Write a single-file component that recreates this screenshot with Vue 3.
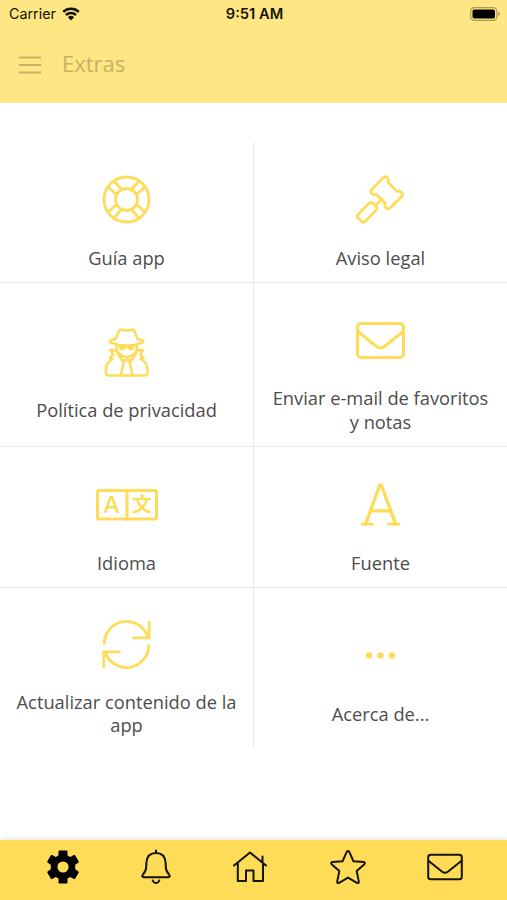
<template>
  <div class="screen">
    <header class="header">
      <div class="status-bar">
        <div class="carrier">
          <span>Carrier</span>
          <svg class="wifi" viewBox="0 0 18 14">
            <path d="M1.2 4.8a11.5 11.5 0 0 1 15.6 0M4 8a7.3 7.3 0 0 1 10 0" />
            <path class="wifi-dot" d="M5.9 10.3a4.5 4.5 0 0 1 6.2 0L9 13.5z" />
          </svg>
        </div>
        <span class="time">9:51 AM</span>
        <svg class="battery" viewBox="0 0 31 14">
          <rect class="battery-shell" x=".6" y=".6" width="26.3" height="12.8" rx="3.8" />
          <rect x="2.5" y="2.5" width="22.5" height="9" rx="1.8" />
          <path class="battery-tip" d="M28.2 5c2.3.8 2.3 3.2 0 4z" />
        </svg>
      </div>
      <div class="title-bar">
        <svg class="menu" viewBox="0 0 22 18">
          <path d="M0 1.5h22M0 9h22M0 16.5h22" />
        </svg>
        <h1>Extras</h1>
      </div>
    </header>

    <main class="grid">
      <div v-for="item in items" :key="item.icon" class="cell">
        <svg v-if="item.icon === 'guide'" class="icon thin" viewBox="0 0 49 49">
          <circle cx="24.5" cy="24.5" r="22.5" />
          <circle cx="24.5" cy="24.5" r="11" />
          <path d="M12.5 6.500l6.500 7.500M6.500 12.500l7.500 6.500M36.500 6.500L30 14M42.500 12.500L35 19M12.500 42.500L19 35M6.500 36.500L14 30M36.500 42.500L30 35M42.500 36.500L35 30" />
        </svg>
        <svg v-else-if="item.icon === 'legal'" class="icon thin" viewBox="0 0 49 49">
          <path d="M15.5 14.8L27.2 2.6q2.2-1.9 4.3.3 1.4 1.8.5 4.3l8.8 9.2q2.8-1 4.8 1 1.9 2.1 0 4.2L34 33q-2.2 1.9-4.3-.2-1.8-1.9-.6-4.7l-8.8-8.6q-2.6.9-4.6-.8-1.9-1.8-.2-3.9z" />
          <path d="M25.8 24.2l-6.2 6M1.9 39.8L13 28.3q2.1-1.7 4.2.2l2.8 2.7q1.9 2.1 0 4.2L9.5 46.1q-2.1 1.8-4.2 0l-3.2-3q-1.7-1.6-.2-3.3z" />
        </svg>
        <svg v-else-if="item.icon === 'privacy'" class="icon spy" viewBox="0 0 49 49">
          <path d="M13.5 11L17 3q1-2 3-1.300 4.500 1.800 9.500 0 2-.700 3 1.300l3 8 5 1.300q2 1.200 0 2.300-15.500 5.800-32 0-2-1.100 0-2.300z" />
          <path d="M14.5 17v4.500q2.200 6.500 10.200 7.700 8-1.200 10.200-7.700V17" />
          <path class="solid glasses" d="M17.2 18h15l-.8 3.500q-3.500 2-5.700-1.500h-2q-2.200 3.500-5.700 1.500z" />
          <path d="M14.3 22.200l-6-.2 2.900 4.500-3.400 3.300 3 1.200c-5 2.500-7 5.500-7 12.500 0 3 .7 4 3.200 4h35.400c2.500 0 3.200-1 3.200-4 0-7-2-10-7-12.500l3-1.200-3.400-3.300 2.900-4.500-6 .2" />
          <path d="M14.5 23.500L21.700 35l-3 12M34.900 23.500L27.700 35l3 12M21 32.200h7.500" />
        </svg>
        <svg v-else-if="item.icon === 'mail'" class="icon" viewBox="0 0 49 49">
          <rect x="1.5" y="7.5" width="46" height="34" rx="3.5" />
          <path d="M2 15.500l18.500 15q4 3 8 0l18.500-15" />
        </svg>
        <svg v-else-if="item.icon === 'language'" class="icon wide" viewBox="0 0 62 49">
          <rect x="1.5" y="10.5" width="59" height="28.5" rx="1.5" />
          <path d="M31 10.500V39" />
          <text class="latin" x="15.5" y="33">A</text>
          <text class="han" x="46" y="32">文</text>
        </svg>
        <svg v-else-if="item.icon === 'font'" class="icon" viewBox="0 0 49 49">
          <text class="slab" x="24.5" y="44.5">A</text>
          <path class="foot" d="M6 44.200h10.500M32.500 44.200H43" />
        </svg>
        <svg v-else-if="item.icon === 'refresh'" class="icon thin" viewBox="0 0 49 49">
          <path class="square" d="M2.300 24.500A22.300 22.300 0 0 1 46 17.500M47.200 1v16.800H30.500M46.700 24.500A22.300 22.300 0 0 1 3 31.500M1.800 48V31.800h16.700" />
        </svg>
        <svg v-else class="icon" viewBox="0 0 49 49">
          <circle class="solid" cx="13" cy="24.5" r="1.7" />
          <circle class="solid" cx="24.5" cy="24.5" r="1.7" />
          <circle class="solid" cx="36" cy="24.5" r="1.7" />
        </svg>
        <div class="label">{{ item.label }}</div>
      </div>
    </main>

    <nav class="tabs">
      <svg class="tab-gear" viewBox="2 0 32 36">
        <path class="gear" d="M14.500 1.500h7q1 0 1 1v4l2.800 1.600 3.400-2q1-.5 1.600.4l3.300 5.700q.5 1-.4 1.500l-3 2v4.600l3 2q.9.500.4 1.500l-3.300 5.700q-.6.900-1.600.4l-3.400-2-2.800 1.600v4q0 1-1 1h-7q-1 0-1-1v-4l-2.800-1.600-3.400 2q-1 .5-1.600-.4l-3.300-5.700q-.5-1 .4-1.500l3-2v-4.600l-3-2q-.9-.5-.4-1.500L5.700 6.500q.6-.9 1.600-.4l3.400 2L13.500 6.500v-4q0-1 1-1zM18 12.400a5.600 5.600 0 1 0 0 11.200 5.600 5.600 0 1 0 0-11.200z" />
      </svg>
      <svg class="tab-bell" viewBox="3 0 30 36">
        <path d="M18 1.500v2.300M8.300 17v-3Q9 4 18 4t9.700 10v3q0 5 3.300 8.500 2 2.500-1 2.700H6q-3-.2-1-2.700Q8.300 22 8.300 17zM14.700 31.500q1 2.500 3.300 2.500t3.300-2.500" />
      </svg>
      <svg class="tab-home" viewBox="1 0 34 36">
        <path d="M2 16.500L18 3.500l16 13M5.800 14v18H14V21.500h7.500V32H31V14M30.500 13.500v-6" />
      </svg>
      <svg class="tab-star" viewBox="0 0 36 36">
        <path d="M18 2q1 0 1.500 1.300l4 9 10 .8q2.300.5.600 2.300l-7.400 6.700 2.100 10.500q.2 2.200-1.900 1.200L18 28.600l-8.900 5.200q-2.100 1-1.900-1.200l2.100-10.500-7.400-6.700q-1.700-1.800.6-2.300l10-.8 4-9Q17 2 18 2z" />
      </svg>
      <svg class="tab-mail" viewBox="0 0 36 36">
        <rect x="1.2" y="5.7" width="33.6" height="24.5" rx="2.5" />
        <path d="M1.700 12l13.500 10.800q2.800 2 5.600 0L34.300 12" />
      </svg>
    </nav>
  </div>
</template>

<script setup>
const items = [
  { icon: 'guide', label: 'Guía app' },
  { icon: 'legal', label: 'Aviso legal' },
  { icon: 'privacy', label: 'Política de privacidad' },
  { icon: 'mail', label: 'Enviar e-mail de favoritos y notas' },
  { icon: 'language', label: 'Idioma' },
  { icon: 'font', label: 'Fuente' },
  { icon: 'refresh', label: 'Actualizar contenido de la app' },
  { icon: 'about', label: 'Acerca de...' },
];
</script>

<style>
body {
  margin: 0;
}
</style>

<style scoped>
.screen {
  display: flex;
  flex-direction: column;
  height: 900px;
  background: #fff;
  font-family: "Open Sans", sans-serif;
}
svg {
  display: block;
  overflow: visible;
  fill: none;
  stroke-linecap: round;
  stroke-linejoin: round;
}
.header {
  height: 103px;
  background: #fee685;
}
.status-bar {
  display: grid;
  grid-template-columns: 1fr auto 1fr;
  align-items: center;
  height: 27px;
  padding: 0 7px 0 9px;
  font-family: Inter, sans-serif;
  font-size: 14.3px;
  color: #151307;
}
.carrier {
  display: flex;
  align-items: center;
  gap: 6px;
}
.wifi {
  width: 18px;
  height: 14px;
  stroke: #151307;
  stroke-width: 2.5;
  stroke-linecap: butt;
}
.wifi-dot {
  fill: #151307;
  stroke: none;
}
.time {
  font-size: 14.7px;
  font-weight: 600;
}
.battery {
  justify-self: end;
  width: 31px;
  height: 14px;
  margin-right: -1px;
  fill: #000;
}
.battery-shell {
  fill: none;
  stroke: #a99a59;
  stroke-width: 1.2;
}
.battery-tip {
  fill: #a99a59;
}
.title-bar {
  display: flex;
  align-items: center;
  height: 75px;
  padding-left: 19px;
  gap: 21px;
}
.menu {
  width: 22px;
  height: 18px;
  stroke: #c5b166;
  stroke-width: 1.8;
  stroke-linecap: butt;
}
h1 {
  margin: 0;
  padding-bottom: 3px;
  font-size: 22px;
  font-weight: 400;
  line-height: 30px;
  color: #c5b166;
}
.grid {
  display: grid;
  grid-template-columns: 254px 253px;
  grid-template-rows: 141px 164px 141px 160px;
  margin-top: 39px;
}
.cell {
  box-sizing: border-box;
  display: flex;
  flex-direction: column;
  align-items: center;
  justify-content: center;
  gap: 21.3px;
  padding: 20.6px 14px 0;
  border-bottom: 1px solid #e9e9e9;
}
.cell:nth-child(odd) {
  border-right: 1px solid #e9e9e9;
}
.cell:nth-last-child(-n + 2) {
  border-bottom: none;
}
.icon {
  flex-shrink: 0;
  width: 49px;
  height: 49px;
  stroke: #fedc5a;
  stroke-width: 3;
}
.icon.thin {
  stroke-width: 2.8;
}
.icon.spy {
  stroke-width: 2.5;
}
.icon.wide {
  width: 62px;
}
.solid {
  fill: #fedc5a;
}
.glasses {
  stroke-width: 0.8;
}
.square {
  stroke-linecap: butt;
  stroke-linejoin: miter;
}
.icon text {
  fill: #fedc5a;
  stroke: none;
  text-anchor: middle;
}
.icon .latin {
  font-size: 24px;
  font-weight: 600;
}
.icon .han {
  font-family: "Noto Sans CJK SC", sans-serif;
  font-size: 20px;
  font-weight: 700;
}
.icon .slab {
  font-family: Inter, sans-serif;
  font-size: 56px;
  font-weight: 200;
  stroke: #fedc5a;
  stroke-width: 0.8;
}
.foot {
  stroke-width: 2.7;
}
.label {
  font-size: 18.3px;
  line-height: 23.5px;
  text-align: center;
  color: #4c4c4c;
}
.tabs {
  display: flex;
  justify-content: space-between;
  height: 60px;
  box-sizing: border-box;
  margin-top: auto;
  padding: 9px 44px 0 47px;
  background: #fedc58;
  box-shadow: 0 -2px 6px rgba(0, 0, 0, 0.1);
}
.tabs svg {
  width: 36px;
  height: 36px;
  stroke: #151307;
  stroke-width: 2;
}
.tabs .tab-gear {
  width: 32px;
}
.tabs .tab-bell {
  width: 30px;
  margin-left: -1px;
}
.tabs .tab-home {
  width: 34px;
}
.tabs .tab-star {
  margin-right: -1px;
}
.tabs .gear {
  fill: #000;
  fill-rule: evenodd;
  stroke: none;
}
</style>
